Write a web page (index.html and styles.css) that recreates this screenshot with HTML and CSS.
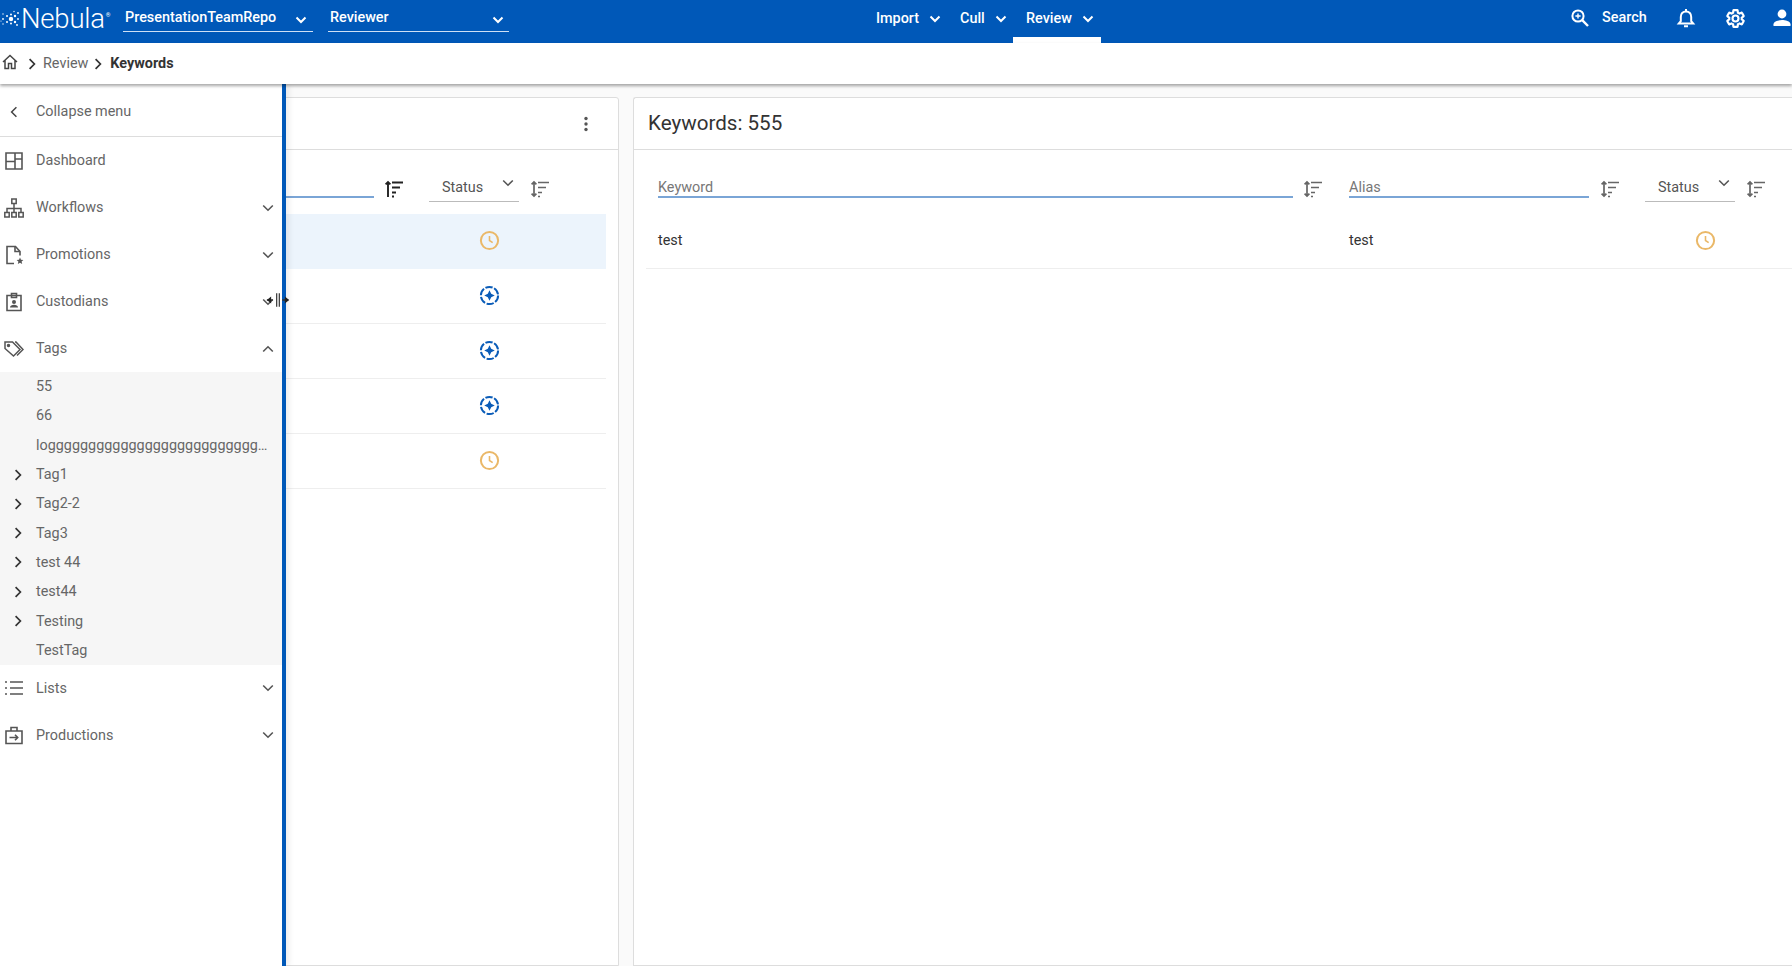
FILE: index.html
```html
<!DOCTYPE html>
<html lang="en">
<head>
<meta charset="utf-8">
<title>Keywords</title>
<link rel="stylesheet" href="styles.css">
</head>
<body>
<svg class="defs" width="0" height="0" aria-hidden="true">
  <defs>
    <symbol id="chev" viewBox="0 0 12 8"><path d="M1.2 1.5 6 6.200l4.800-4.700" fill="none" stroke="currentColor" stroke-width="1.600"/></symbol>
    <symbol id="chev-bold" viewBox="0 0 12 8"><path d="M1.500 1.500 6 6l4.500-4.500" fill="none" stroke="currentColor" stroke-width="2"/></symbol>
    <symbol id="chev-r" viewBox="0 0 8 12"><path d="M1.600 1.200 6.400 6l-4.800 4.800" fill="none" stroke="currentColor" stroke-width="1.700"/></symbol>
    <symbol id="sort" viewBox="0 0 20 20"><g fill="none" stroke="currentColor" stroke-width="1.700"><path d="M4 3v14M1.600 5.400 4 3l2.400 2.400M1.600 14.600 4 17l2.400-2.400"/><path d="M8 3.500h11M8 8.500h8M8 13.500h4M8 17.500h2"/></g></symbol>
    <symbol id="sort-up" viewBox="0 0 20 20"><g fill="none" stroke="currentColor" stroke-width="1.900"><path d="M4 18V3M1.600 5.400 4 3l2.400 2.400"/><path d="M8 3.500h11M8 8.500h8M8 13.500h4M8 17.500h2"/></g></symbol>
    <symbol id="clock" viewBox="0 0 20 20"><g fill="none" stroke="#eab868"><circle cx="10" cy="10" r="8.200" stroke-width="1.900"/><path d="M10 5.800V10l3 2" stroke-width="1.500"/></g></symbol>
    <symbol id="spark" viewBox="0 0 20 20"><circle cx="10" cy="10" r="8.200" fill="none" stroke="#0a5cb8" stroke-width="1.900" stroke-dasharray="7 1.600"/><path d="M10 5 11.600 8.400 15 10 11.600 11.600 10 15 8.400 11.600 5 10 8.400 8.400Z" fill="#0a5cb8"/></symbol>
  </defs>
</svg>

<header class="topbar">
  <div class="brand">
    <svg class="brand-mark" viewBox="0 0 20 20" width="20" height="20" fill="#fff"><circle cx="11" cy="10" r="2.200"/><circle cx="7" cy="7" r="1"/><circle cx="7" cy="13" r="1"/><circle cx="11" cy="5.500" r="1"/><circle cx="11" cy="14.500" r="1"/><circle cx="15" cy="7" r="1.200"/><circle cx="15" cy="13" r="1.200"/><circle cx="18" cy="4" r=".9"/><circle cx="18" cy="10" r=".9"/><circle cx="17" cy="16" r=".9"/><circle cx="3" cy="10" r=".9"/><circle cx="3" cy="5" r=".7"/><circle cx="3" cy="15" r=".7"/><circle cx="1" cy="12" r=".6"/><circle cx="14" cy="2.500" r=".7"/></svg>
    <span class="brand-name">Nebula</span><span class="brand-reg">®</span>
  </div>
  <div class="top-select top-select-repo"><span>PresentationTeamRepo</span><svg class="chev-top"><use href="#chev-bold"/></svg></div>
  <div class="top-select top-select-role"><span>Reviewer</span><svg class="chev-top"><use href="#chev-bold"/></svg></div>
  <nav class="top-nav">
    <a class="nav-item nav-import">Import<svg class="chev-top"><use href="#chev-bold"/></svg></a>
    <a class="nav-item nav-cull">Cull<svg class="chev-top"><use href="#chev-bold"/></svg></a>
    <a class="nav-item nav-review">Review<svg class="chev-top"><use href="#chev-bold"/></svg></a>
  </nav>
  <div class="top-tools">
    <svg class="tool-search" viewBox="0 0 20 20" width="20" height="20" fill="none" stroke="#fff"><circle cx="8" cy="8" r="5.600" stroke-width="2"/><path d="M12.200 12.200 18 18" stroke-width="2.400"/><path d="M8 5.400v5.200M5.400 8h5.200" stroke-width="1.400"/></svg>
    <span class="tool-label">Search</span>
    <svg class="tool-bell" viewBox="0 0 20 20" width="20" height="20" fill="none" stroke="#fff" stroke-width="2"><path d="M2.800 15.600h14.400l-2-2.400V9c0-3.200-2-5.600-5.200-5.600S4.800 5.800 4.800 9v4.200Z"/><path d="M8 18.200h4M10 1v2"/></svg>
    <svg class="tool-gear" viewBox="0 0 24 24" width="21" height="21" fill="none" stroke="#fff" stroke-width="2.500"><path d="M19.140 12.940c.04-.3.06-.61.06-.94 0-.32-.02-.64-.07-.94l2.030-1.580c.18-.14.23-.41.12-.61l-1.920-3.320c-.12-.22-.37-.29-.59-.22l-2.390.96c-.5-.38-1.030-.7-1.620-.94l-.36-2.540c-.04-.24-.24-.41-.48-.41h-3.840c-.24 0-.43.17-.47.41l-.36 2.540c-.59.24-1.130.57-1.620.94l-2.390-.96c-.22-.08-.47 0-.59.22L2.740 8.870c-.12.21-.08.47.12.61l2.030 1.580c-.05.3-.09.63-.09.94s.02.64.07.94l-2.030 1.580c-.18.14-.23.41-.12.61l1.920 3.320c.12.22.37.29.59.22l2.390-.96c.5.38 1.030.7 1.620.94l.36 2.540c.05.24.24.41.48.41h3.840c.24 0 .44-.17.47-.41l.36-2.540c.59-.24 1.130-.56 1.620-.94l2.390.96c.22.08.47 0 .59-.22l1.920-3.320c.12-.22.07-.47-.12-.61z"/><circle cx="12" cy="12" r="3.400"/></svg>
    <svg class="tool-user" viewBox="0 0 20 20" width="20" height="20" fill="#fff"><circle cx="10" cy="6" r="4.400"/><path d="M1.500 18v-1.800c0-3 5.500-4.200 8.500-4.200s8.500 1.200 8.500 4.200V18Z"/></svg>
  </div>
</header>

<div class="crumbs">
  <svg class="crumb-home" viewBox="0 0 16 16" width="16" height="16" fill="none" stroke="#444" stroke-width="1.500"><path d="M1 8 8 1.500 15 8M3 6.500V14.500h3.500V9.500h3v5H13V6.500"/></svg>
  <svg class="crumb-sep crumb-sep-first"><use href="#chev-r"/></svg>
  <span class="crumb-link">Review</span>
  <svg class="crumb-sep crumb-sep-second"><use href="#chev-r"/></svg>
  <span class="crumb-current">Keywords</span>
</div>

<main class="workspace">
  <section class="panel panel-left">
    <div class="panel-head panel-head-end">
      <svg class="kebab" viewBox="0 0 4 16" width="4" height="16" fill="#555"><circle cx="2" cy="2.500" r="1.700"/><circle cx="2" cy="8" r="1.700"/><circle cx="2" cy="13.500" r="1.700"/></svg>
    </div>
    <div class="filters filters-left">
      <div class="filter-cell"><div class="field field-left"></div><svg class="sort sort-active"><use href="#sort-up"/></svg></div>
      <div class="filter-cell filter-status">
        <div class="status-select"><span>Status</span><svg class="chev-status"><use href="#chev"/></svg></div>
        <svg class="sort"><use href="#sort"/></svg>
      </div>
    </div>
    <div class="list list-left">
      <div class="row row-left row-selected"><span></span><svg class="state"><use href="#clock"/></svg></div>
      <div class="row row-left"><span></span><svg class="state"><use href="#spark"/></svg></div>
      <div class="row row-left"><span></span><svg class="state"><use href="#spark"/></svg></div>
      <div class="row row-left"><span></span><svg class="state"><use href="#spark"/></svg></div>
      <div class="row row-left"><span></span><svg class="state"><use href="#clock"/></svg></div>
    </div>
  </section>

  <section class="panel panel-right">
    <div class="panel-head"><h1 class="panel-title">Keywords: 555</h1></div>
    <div class="filters filters-right">
      <div class="filter-cell"><div class="field field-keyword">Keyword</div><svg class="sort"><use href="#sort"/></svg></div>
      <div class="filter-cell"><div class="field field-alias">Alias</div><svg class="sort"><use href="#sort"/></svg></div>
      <div class="filter-cell filter-status">
        <div class="status-select"><span>Status</span><svg class="chev-status"><use href="#chev"/></svg></div>
        <svg class="sort"><use href="#sort"/></svg>
      </div>
    </div>
    <div class="list list-right">
      <div class="row row-right"><span>test</span><span>test</span><svg class="state"><use href="#clock"/></svg></div>
    </div>
  </section>

  <aside class="sidebar">
    <div class="collapse-row">
      <svg class="collapse-chev" viewBox="0 0 8 12"><path d="M6.400 1.200 1.600 6l4.800 4.800" fill="none" stroke="currentColor" stroke-width="1.500"/></svg>
      <span>Collapse menu</span>
    </div>
    <ul class="menu">
      <li class="menu-item">
        <svg class="menu-icon" viewBox="0 0 20 20" fill="none" stroke="#555" stroke-width="1.600"><path d="M2 2h16v16H2zM11 2v16M2 10.500h9M11 8h7"/></svg>
        <span class="menu-label">Dashboard</span>
      </li>
      <li class="menu-item">
        <svg class="menu-icon" viewBox="0 0 20 20" fill="none" stroke="#555" stroke-width="1.500"><path d="M7.800 1h4.400v4.400H7.800zM.8 14.500h4.400v4.400H.8zM7.800 14.500h4.400v4.400H7.800zM14.800 14.500h4.400v4.400h-4.400zM10 5.400v9M3 14.500v-4h14v4"/></svg>
        <span class="menu-label">Workflows</span>
        <svg class="menu-chev"><use href="#chev"/></svg>
      </li>
      <li class="menu-item">
        <svg class="menu-icon" viewBox="0 0 20 20" fill="none" stroke="#555" stroke-width="1.600"><path d="M10 18.500H3V1.500h8.500L16 6.500v4"/><path d="M11 1.500V6.500h5"/><path d="m16 12.500 1 2.300 2.400.2-1.800 1.600.6 2.400-2.200-1.300-2.200 1.300.6-2.400-1.800-1.600 2.400-.2Z" fill="#555" stroke="none"/></svg>
        <span class="menu-label">Promotions</span>
        <svg class="menu-chev"><use href="#chev"/></svg>
      </li>
      <li class="menu-item">
        <svg class="menu-icon" viewBox="0 0 20 20" fill="none" stroke="#555" stroke-width="1.600"><path d="M3 3.500h14v15H3zM7.500 1.500h5v4h-5z"/><circle cx="10" cy="10" r="2" fill="#555" stroke="none"/><path d="M6 15.500c0-2 2-2.800 4-2.800s4 .8 4 2.800Z" fill="#555" stroke="none"/></svg>
        <span class="menu-label">Custodians</span>
        <svg class="menu-chev"><use href="#chev"/></svg>
      </li>
      <li class="menu-item">
        <svg class="menu-icon" viewBox="0 0 20 20" fill="none" stroke="#555" stroke-width="1.500"><path d="M1 3h7.500l7.500 7.500-6.500 6.500L1 9.500Z"/><path d="M11 3h1l7 7.500-6 6"/><circle cx="4.500" cy="6.500" r="1" fill="#555"/></svg>
        <span class="menu-label">Tags</span>
        <svg class="menu-chev menu-chev-open"><use href="#chev"/></svg>
      </li>
    </ul>
    <ul class="submenu">
      <li class="sub-item"><span class="sub-label">55</span></li>
      <li class="sub-item"><span class="sub-label">66</span></li>
      <li class="sub-item"><span class="sub-label">logggggggggggggggggggggggggg…</span></li>
      <li class="sub-item"><svg class="sub-chev"><use href="#chev-r"/></svg><span class="sub-label">Tag1</span></li>
      <li class="sub-item"><svg class="sub-chev"><use href="#chev-r"/></svg><span class="sub-label">Tag2-2</span></li>
      <li class="sub-item"><svg class="sub-chev"><use href="#chev-r"/></svg><span class="sub-label">Tag3</span></li>
      <li class="sub-item"><svg class="sub-chev"><use href="#chev-r"/></svg><span class="sub-label">test 44</span></li>
      <li class="sub-item"><svg class="sub-chev"><use href="#chev-r"/></svg><span class="sub-label">test44</span></li>
      <li class="sub-item"><svg class="sub-chev"><use href="#chev-r"/></svg><span class="sub-label">Testing</span></li>
      <li class="sub-item"><span class="sub-label">TestTag</span></li>
    </ul>
    <ul class="menu">
      <li class="menu-item">
        <svg class="menu-icon" viewBox="0 0 20 20" fill="none" stroke="#555" stroke-width="1.600"><path d="M6 4h13M6 10h13M6 16h13M1 4h2M1 10h2M1 16h2"/></svg>
        <span class="menu-label">Lists</span>
        <svg class="menu-chev"><use href="#chev"/></svg>
      </li>
      <li class="menu-item">
        <svg class="menu-icon" viewBox="0 0 20 20" fill="none" stroke="#555" stroke-width="1.600"><path d="M2 6h16v12.500H2zM7 6V2.500h6V6M5.500 12.500h8M11 9.800l2.700 2.700-2.700 2.700"/></svg>
        <span class="menu-label">Productions</span>
        <svg class="menu-chev"><use href="#chev"/></svg>
      </li>
    </ul>
    <svg class="resize-cursor" viewBox="0 0 28 16" width="24" height="14"><path d="M1 8h7M19 8h7" stroke="#333" stroke-width="2"/><path d="M6 4 1 8l5 4ZM22 4l5 4-5 4Z" fill="#222"/><path d="M12.500 0v16M15.500 0v16" stroke="#222" stroke-width="1.300"/></svg>
  </aside>
</main>
</body>
</html>
```

FILE: styles.css
```css
* { box-sizing: border-box; }
html, body { margin: 0; height: 100%; }
body {
  display: flex;
  flex-direction: column;
  height: 966px;
  overflow: hidden;
  background: #fafafa;
  font-family: Roboto, "Liberation Sans", sans-serif;
  font-size: 14.4px;
  color: #444;
}
.defs { position: absolute; }
ul { list-style: none; margin: 0; padding: 0; }

/* top bar */
.topbar {
  flex: none;
  display: flex;
  align-items: flex-start;
  height: 43px;
  background: #0058b8;
  color: #fff;
  font-weight: 500;
}
.topbar > * { flex: none; }
.brand { display: flex; align-items: center; width: 123px; height: 37px; }
.brand-mark { flex: none; margin-right: 1px; }
.brand-name { font-size: 27.5px; font-weight: 300; letter-spacing: -.2px; line-height: 36px; }
.brand-reg { font-size: 6px; margin: -8px 0 0 1px; font-weight: 400; }
.top-select {
  display: flex;
  align-items: flex-start;
  justify-content: space-between;
  height: 32px;
  padding: 9px 4px 0 2px;
  line-height: 18px;
  border-bottom: 1px solid #cfe0f5;
}
.top-select-repo { width: 190px; margin-right: 15px; }
.top-select-role { width: 181px; }
.chev-top { flex: none; width: 12px; height: 8px; margin-top: 7px; color: #fff; }
.top-select-repo .chev-top { margin-right: 2px; }
.top-select-role .chev-top { margin-right: 1px; }

.top-nav { display: flex; margin-left: 367px; height: 43px; }
.nav-item { display: flex; align-items: flex-start; height: 43px; padding-top: 10px; line-height: 18px; }
.nav-item .chev-top { margin-top: 5px; margin-left: 10px; }
.nav-import { width: 84px; }
.nav-cull { width: 53px; }
.nav-review { width: 88px; padding-left: 13px; border-bottom: 6px solid #fff; }

.top-tools { display: flex; align-items: center; height: 36px; margin-left: auto; }
.tool-search { flex: none; }
.tool-label { margin: -2px 0 0 12px; width: 45px; white-space: nowrap; }
.tool-bell { flex: none; margin-left: 29px; }
.tool-gear { flex: none; margin-left: 29px; }
.tool-user { flex: none; margin-left: 26px; }

/* breadcrumb */
.crumbs {
  position: relative;
  z-index: 3;
  flex: none;
  display: flex;
  align-items: center;
  height: 41px;
  padding: 0 0 0 2px;
  background: #fff;
  box-shadow: 0 2px 3px rgba(0, 0, 0, .35);
}
.crumb-home { flex: none; margin-top: -3px; }
.crumb-sep { flex: none; width: 8px; height: 12px; color: #333; }
.crumb-sep-first { margin: 0 7px 0 10px; }
.crumb-sep-second { margin: 0 8px 0 6px; }
.crumb-link { color: #666; }
.crumb-current { color: #333; font-weight: 700; }

/* workspace */
.workspace {
  position: relative;
  flex: 1;
  display: flex;
  gap: 14px;
  min-height: 0;
  padding: 13px 0 0 12px;
}
.panel {
  display: flex;
  flex-direction: column;
  background: #fff;
  border: 1px solid #ddd;
  border-radius: 3px 3px 0 0;
}
.panel-left { flex: none; width: 607px; }
.panel-right { flex: 1; border-right: 0; border-radius: 3px 0 0 0; }
.panel-head {
  flex: none;
  display: flex;
  align-items: center;
  height: 52px;
  padding: 0 0 2px 14px;
  border-bottom: 1px solid #ddd;
}
.panel-head-end { justify-content: flex-end; padding: 0 30px 0 0; }
.panel-title { margin: 0; font-size: 20.6px; font-weight: 400; color: #333; }

/* filter rows */
.filters { flex: none; display: grid; height: 64px; padding-top: 28px; }
.filters-left { grid-template-columns: 1fr 189px; }
.filters-right { grid-template-columns: 691px 296px 1fr; padding-left: 24px; }
.filter-cell { display: flex; align-items: flex-start; }
.field { flex: 1; height: 20px; padding-top: 1px; line-height: 18px; color: #777; border-bottom: 2px solid #7aa5d6; }
.field-left { margin-right: 10px; }
.field-keyword { flex: none; width: 635px; margin-right: 10px; }
.field-alias { flex: none; width: 240px; margin-right: 11px; }
.sort { flex: none; width: 20px; height: 20px; margin-top: 1px; color: #666; }
.sort-active { color: #222; margin-right: 25px; }
.status-select {
  flex: none;
  display: flex;
  justify-content: space-between;
  width: 90px;
  height: 24px;
  margin-right: 11px;
  padding: 1px 5px 0 13px;
  line-height: 18px;
  color: #555;
  border-bottom: 1px solid #bbb;
}
.chev-status { flex: none; width: 12px; height: 8px; margin-top: 0; color: #555; }

/* rows */
.list { display: flex; flex-direction: column; }
.list-left { padding: 0 12px 0 0; }
.list-right { padding-left: 12px; }
.row { display: grid; align-items: center; height: 55px; padding-bottom: 2px; border-bottom: 1px solid #eee; color: #333; }
.row-left { grid-template-columns: 1fr 177px; }
.row-right { grid-template-columns: 691px 296px 1fr; padding-left: 12px; }
.row-selected { background: #ecf4fc; border-bottom-color: #ecf4fc; }
.state { width: 21px; height: 21px; margin-left: 50px; }

/* flyout sidebar */
.sidebar {
  position: absolute;
  z-index: 2;
  top: 0;
  bottom: 0;
  left: 0;
  width: 286px;
  padding-top: 3px;
  background: #fff;
  border-right: 4px solid #0058b8;
  box-shadow: 3px 0 6px rgba(0, 0, 0, .08);
}
.collapse-row {
  display: flex;
  align-items: center;
  height: 50px;
  color: #666;
  border-bottom: 1px solid #ddd;
}
.collapse-chev { width: 8px; height: 12px; margin: 0 18px 0 10px; color: #444; }
.menu-item { display: flex; align-items: center; height: 47px; color: #666; }
.menu-icon { width: 20px; height: 20px; margin: 0 12px 0 4px; flex: none; }
.menu-label { flex: 1; }
.menu-chev { width: 12px; height: 8px; margin-right: 8px; color: #555; }
.menu-chev-open { transform: rotate(180deg); }
.submenu { background: #f6f6f6; }
.sub-item { position: relative; display: flex; align-items: center; height: 29.3px; padding-left: 36px; color: #666; }
.sub-label { white-space: nowrap; }
.sub-chev { position: absolute; left: 14px; width: 8px; height: 12px; color: #333; }
.resize-cursor { position: absolute; left: 266px; top: 209px; }
```
